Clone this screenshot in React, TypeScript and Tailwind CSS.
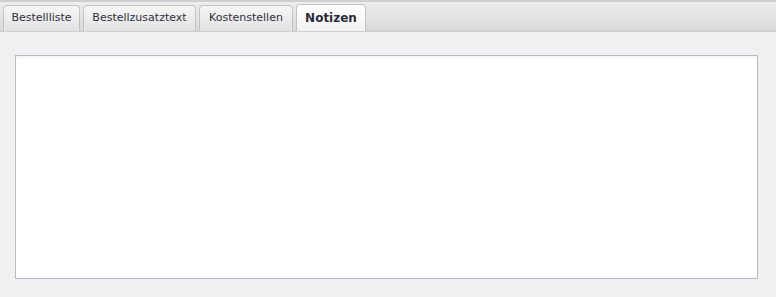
import React from 'react';

const tabs = [
  { label: 'Bestellliste', width: 'w-[77px]' },
  { label: 'Bestellzusatztext', width: 'w-[113px]' },
  { label: 'Kostenstellen', width: 'w-[94px]' },
];

export default function App() {
  return (
    <div className="w-[776px] h-[297px] bg-[#f0f0f0] font-['DejaVu_Sans',sans-serif] overflow-hidden">
      {/* Tab header */}
      <div className="h-[32px] border-t-2 border-[#cfcfcf] border-b-2 border-b-[#d0d0d0] bg-gradient-to-b from-[#eeeeee] to-[#dadada] flex items-end pl-[3px] gap-[3px]">
        {tabs.map((t) => (
          <div
            key={t.label}
            className={`${t.width} h-[26px] mb-[-1px] flex items-center justify-center rounded-t-[4px] border border-b-0 border-[#c3c3c3] bg-gradient-to-b from-[#f6f6f6] to-[#e2e2e2] text-[11px] text-[#2f3140]`}
          >
            {t.label}
          </div>
        ))}
        <div className="w-[70px] h-[27px] mb-[-1px] flex items-center justify-center rounded-t-[4px] border border-b-0 border-[#c3c3c3] bg-gradient-to-b from-[#ffffff] to-[#f2f2f2] text-[12px] font-bold text-[#2a2c3a]">
          Notizen
        </div>
      </div>

      {/* Content */}
      <div className="pt-[23px] pl-[15px] pr-[18px]">
        <textarea className="block w-full h-[224px] resize-none border border-[#b6b8cc] bg-white shadow-[inset_0_2px_2px_rgba(120,130,150,0.08)] outline-none" />
      </div>
    </div>
  );
}
